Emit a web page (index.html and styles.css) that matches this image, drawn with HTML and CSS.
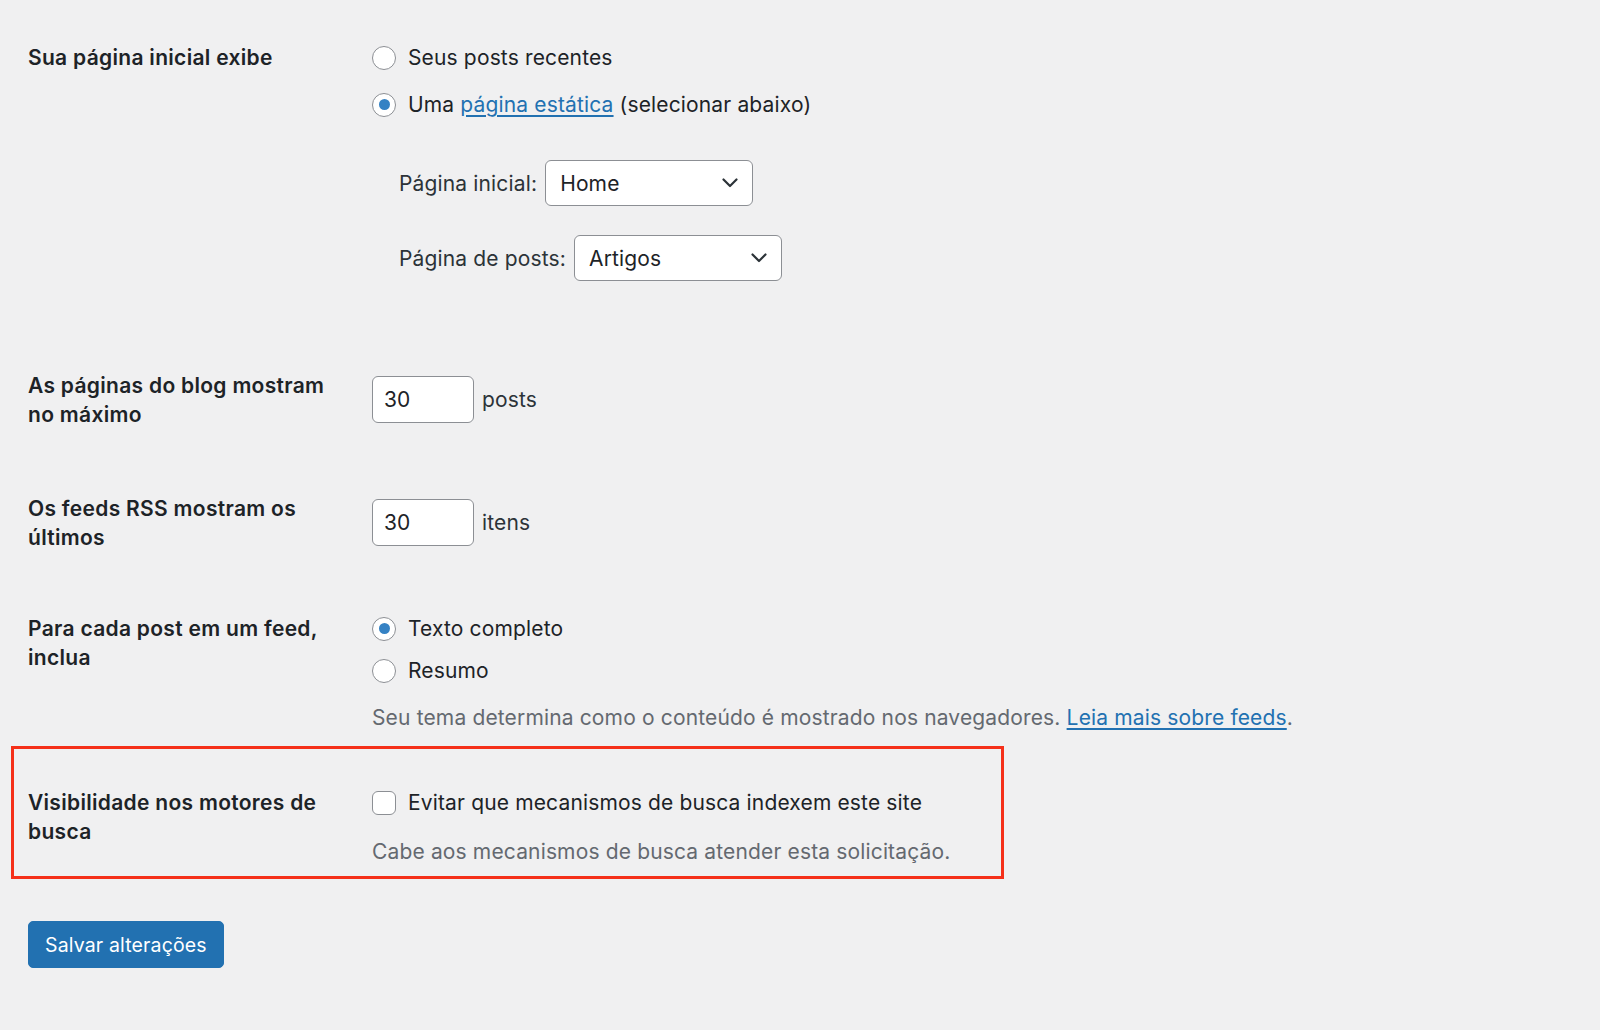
FILE: index.html
```html
<!DOCTYPE html>
<html lang="pt-BR">
<head>
    <meta charset="UTF-8">
    <title>Configurações de leitura</title>
    <link rel="stylesheet" href="styles.css">
</head>
<body>
    <form class="settings">
        <div class="row row-front">
            <div class="row-label">Sua página inicial exibe</div>
            <div class="row-field">
                <label class="option">
                    <span class="radio"></span>
                    Seus posts recentes
                </label>
                <label class="option option-next">
                    <span class="radio checked"></span>
                    <span>Uma <a href="#">página estática</a> (selecionar abaixo)</span>
                </label>
                <div class="page-pick">
                    <div class="pick-row">
                        <span>Página inicial:</span>
                        <div class="select">
                            <span>Home</span>
                            <svg width="16" height="10" viewBox="0 0 16 10"><path d="M1.5 1.5 8 8l6.5-6.5" fill="none" stroke="#2c3338" stroke-width="2.2" stroke-linecap="round" stroke-linejoin="round"/></svg>
                        </div>
                    </div>
                    <div class="pick-row pick-next">
                        <span>Página de posts:</span>
                        <div class="select">
                            <span>Artigos</span>
                            <svg width="16" height="10" viewBox="0 0 16 10"><path d="M1.5 1.5 8 8l6.5-6.5" fill="none" stroke="#2c3338" stroke-width="2.2" stroke-linecap="round" stroke-linejoin="round"/></svg>
                        </div>
                    </div>
                </div>
            </div>
        </div>

        <div class="row row-blog">
            <div class="row-label">As páginas do blog mostram no máximo</div>
            <div class="row-field inline-field">
                <div class="number">30</div>
                <span>posts</span>
            </div>
        </div>

        <div class="row row-rss">
            <div class="row-label">Os feeds RSS mostram os últimos</div>
            <div class="row-field inline-field">
                <div class="number">30</div>
                <span>itens</span>
            </div>
        </div>

        <div class="row row-feed">
            <div class="row-label">Para cada post em um feed, inclua</div>
            <div class="row-field">
                <label class="option">
                    <span class="radio checked"></span>
                    Texto completo
                </label>
                <label class="option option-close">
                    <span class="radio"></span>
                    Resumo
                </label>
                <p class="description">Seu tema determina como o conteúdo é mostrado nos navegadores. <a href="#">Leia mais sobre feeds</a>.</p>
            </div>
        </div>

        <div class="row row-search highlight">
            <div class="row-label">Visibilidade nos motores de busca</div>
            <div class="row-field">
                <label class="option">
                    <span class="checkbox"></span>
                    Evitar que mecanismos de busca indexem este site
                </label>
                <p class="description desc-search">Cabe aos mecanismos de busca atender esta solicitação.</p>
            </div>
        </div>

        <button type="button" class="button-primary">Salvar alterações</button>
    </form>
</body>
</html>
```

FILE: styles.css
```css
body {
    margin: 0;
    padding: 0 28px;
    background: #f0f0f1;
    color: #1d2327;
    font-family: Inter, "Liberation Sans", sans-serif;
    font-size: 21px;
    line-height: 29px;
    letter-spacing: 0.15px;
}

a {
    color: #2271b1;
    text-decoration: underline;
    text-underline-offset: 3px;
}

.settings {
    display: flex;
    flex-direction: column;
    align-items: flex-start;
}

.row {
    display: grid;
    grid-template-columns: 344px 1fr;
}

.row-label {
    font-weight: 600;
    letter-spacing: 0.3px;
    width: 300px;
}

.row-front { margin-top: 43px; }
.row-blog { margin-top: 90px; }
.row-rss { margin-top: 65px; }
.row-feed { margin-top: 62px; }

/* radio / checkbox lines */
.option {
    display: flex;
    align-items: center;
    gap: 12px;
    height: 29px;
    white-space: nowrap;
}

.option-next { margin-top: 18px; }
.option-close { margin-top: 13px; }

.radio, .checkbox {
    box-sizing: border-box;
    width: 24px;
    height: 24px;
    flex: none;
    background: #fff;
    border: 1.5px solid #8c8f94;
    display: flex;
    align-items: center;
    justify-content: center;
}

.radio { border-radius: 50%; }
.checkbox { border-radius: 6px; }

.radio.checked::after {
    content: "";
    width: 11px;
    height: 11px;
    border-radius: 50%;
    background: #3582c4;
}

/* front page / posts page pickers */
.page-pick {
    padding-left: 27px;
    margin-top: 41px;
}

.pick-row {
    display: flex;
    align-items: center;
    gap: 8px;
    color: #2c3338;
}

.pick-next { margin-top: 29px; }

.select {
    box-sizing: border-box;
    width: 208px;
    height: 46px;
    padding: 0 14px;
    background: #fff;
    border: 1.5px solid #8c8f94;
    border-radius: 6px;
    display: flex;
    align-items: center;
    justify-content: space-between;
    color: #1d2327;
}

/* number inputs */
.inline-field {
    display: flex;
    align-items: center;
    gap: 8px;
    padding-top: 5px;
    align-self: start;
    color: #2c3338;
}

.number {
    box-sizing: border-box;
    width: 102px;
    height: 47px;
    padding: 0 11px;
    background: #fff;
    border: 1.5px solid #8c8f94;
    border-radius: 6px;
    display: flex;
    align-items: center;
    color: #1d2327;
}

.description {
    margin: 18px 0 0;
    color: #646970;
    white-space: nowrap;
}

.desc-search { margin-top: 20px; }

/* outlined search visibility block */
.highlight {
    box-sizing: border-box;
    width: 993px;
    margin: 14px 0 0 -17px;
    padding: 39px 0 10px 14px;
    border: 3px solid #f5301a;
}

.button-primary {
    margin-top: 42px;
    height: 47px;
    padding: 0 16px;
    background: #2271b1;
    color: #fff;
    border: 1px solid #2271b1;
    border-radius: 5px;
    font-family: inherit;
    font-size: 19.5px;
    letter-spacing: 0.15px;
    cursor: pointer;
}
```
